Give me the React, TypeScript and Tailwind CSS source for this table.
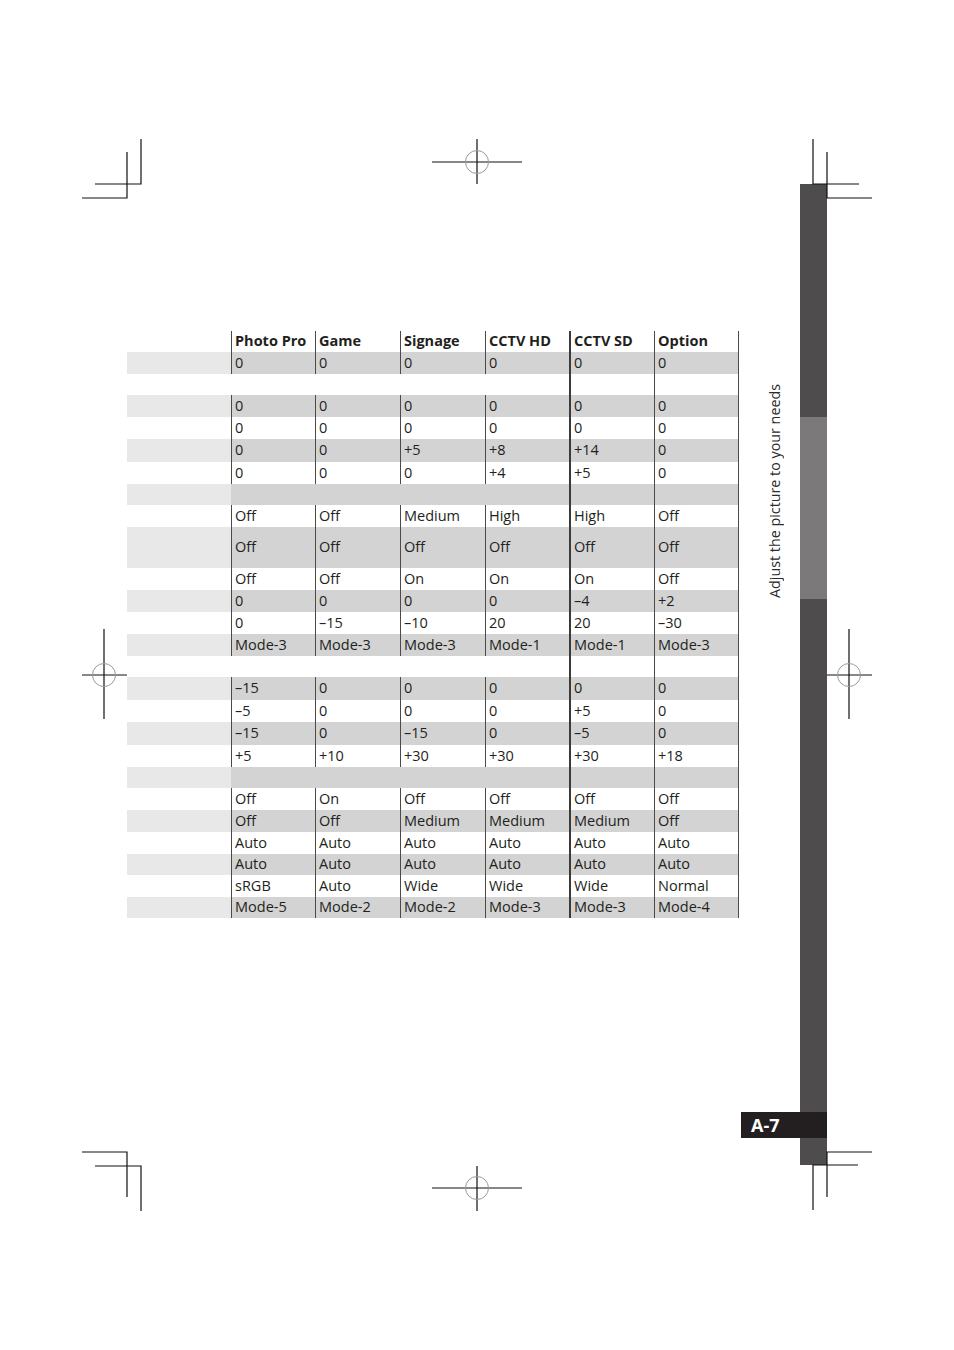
import React from "react";

type Row =
  | { kind: "data"; h: string; v: string[] }
  | { kind: "blank"; h: string }
  | { kind: "section"; h: string };

const cols = ["Photo Pro", "Game", "Signage", "CCTV HD", "CCTV SD", "Option"];

const rows: Row[] = [
  { kind: "data", h: "h-[22px]", v: ["0", "0", "0", "0", "0", "0"] },
  { kind: "blank", h: "h-[21px]" },
  { kind: "data", h: "h-[22px]", v: ["0", "0", "0", "0", "0", "0"] },
  { kind: "data", h: "h-[22px]", v: ["0", "0", "0", "0", "0", "0"] },
  { kind: "data", h: "h-[23px]", v: ["0", "0", "+5", "+8", "+14", "0"] },
  { kind: "data", h: "h-[22px]", v: ["0", "0", "0", "+4", "+5", "0"] },
  { kind: "section", h: "h-[21px]" },
  { kind: "data", h: "h-[22px]", v: ["Off", "Off", "Medium", "High", "High", "Off"] },
  { kind: "data", h: "h-[41px]", v: ["Off", "Off", "Off", "Off", "Off", "Off"] },
  { kind: "data", h: "h-[22px]", v: ["Off", "Off", "On", "On", "On", "Off"] },
  { kind: "data", h: "h-[22px]", v: ["0", "0", "0", "0", "–4", "+2"] },
  { kind: "data", h: "h-[22px]", v: ["0", "–15", "–10", "20", "20", "–30"] },
  { kind: "data", h: "h-[22px]", v: ["Mode-3", "Mode-3", "Mode-3", "Mode-1", "Mode-1", "Mode-3"] },
  { kind: "blank", h: "h-[21px]" },
  { kind: "data", h: "h-[23px]", v: ["–15", "0", "0", "0", "0", "0"] },
  { kind: "data", h: "h-[22px]", v: ["–5", "0", "0", "0", "+5", "0"] },
  { kind: "data", h: "h-[23px]", v: ["–15", "0", "–15", "0", "–5", "0"] },
  { kind: "data", h: "h-[22px]", v: ["+5", "+10", "+30", "+30", "+30", "+18"] },
  { kind: "section", h: "h-[21px]" },
  { kind: "data", h: "h-[22px]", v: ["Off", "On", "Off", "Off", "Off", "Off"] },
  { kind: "data", h: "h-[22px]", v: ["Off", "Off", "Medium", "Medium", "Medium", "Off"] },
  { kind: "data", h: "h-[22px]", v: ["Auto", "Auto", "Auto", "Auto", "Auto", "Auto"] },
  { kind: "data", h: "h-[21px]", v: ["Auto", "Auto", "Auto", "Auto", "Auto", "Auto"] },
  { kind: "data", h: "h-[22px]", v: ["sRGB", "Auto", "Wide", "Wide", "Wide", "Normal"] },
  { kind: "data", h: "h-[21px]", v: ["Mode-5", "Mode-2", "Mode-2", "Mode-3", "Mode-3", "Mode-4"] },
];

const grid = "grid grid-cols-[104px_84px_85px_85px_84px_85px_85px]";

// border on the left of each data column; CCTV SD has the heavier rule
const lineCls = [
  "border-l border-[#4a4a4a]",
  "border-l border-[#4a4a4a]",
  "border-l border-[#4a4a4a]",
  "border-l border-[#4a4a4a]",
  "border-l-2 border-[#3a3a3a]",
  "border-l border-r border-[#4a4a4a]",
];

function TableRow({ row, i }: { row: Row; i: number }) {
  const shaded = i % 2 === 0;
  const labelBg = shaded ? "bg-[#e8e8e8]" : "bg-white";
  const dataBg = shaded ? "bg-[#d3d3d3]" : "bg-white";

  if (row.kind !== "data") {
    return (
      <div className={`${grid} ${row.h}`}>
        <div className={labelBg} />
        <div className={`col-span-4 ${dataBg}`} />
        <div className={`${dataBg} ${lineCls[4]}`} />
        <div className={`${dataBg} ${lineCls[5]}`} />
      </div>
    );
  }

  return (
    <div className={`${grid} ${row.h}`}>
      <div className={labelBg} />
      {row.v.map((v, c) => (
        <div key={c} className={`flex items-center pl-[3px] ${dataBg} ${lineCls[c]}`}>
          {v}
        </div>
      ))}
    </div>
  );
}

function Marks() {
  const k = "#111";
  return (
    <svg className="absolute inset-0 pointer-events-none" width="954" height="1350" viewBox="0 0 954 1350">
      <g stroke={k} strokeWidth="1.2" fill="none">
        {/* top-left */}
        <path d="M141 139V184H95M127 152V198H82" />
        {/* top-right */}
        <path d="M813 139V184H859M827 152V198H872" />
        {/* bottom-left */}
        <path d="M82 1152H127V1197M95 1166H141V1211" />
        {/* bottom-right */}
        <path d="M872 1152H827V1197M858 1165H813V1210" />
        {/* registration crosses */}
        <path d="M432 162H522M477 139V184" />
        <path d="M432 1188H522M477 1166V1211" />
        <path d="M82 675H127M104 629V719" />
        <path d="M827 675H872M849 629V719" />
      </g>
      <g stroke="#999" strokeWidth="1" fill="none">
        <circle cx="477" cy="162" r="11.5" />
        <circle cx="477" cy="1188" r="11.5" />
        <circle cx="104" cy="675" r="11.5" />
        <circle cx="849" cy="675" r="11.5" />
      </g>
    </svg>
  );
}

export default function App() {
  return (
    <div className="relative flex w-[954px] h-[1350px] bg-white text-[#231f20] font-['Open_Sans',sans-serif]">
      {/* settings table */}
      <div className="ml-[127px] mt-[331px] w-[612px] text-[14.5px] leading-none">
        <div className={`${grid} h-[21px]`}>
          <div />
          {cols.map((c, i) => (
            <div key={c} className={`flex items-center pl-[3px] font-bold ${lineCls[i]}`}>
              {c}
            </div>
          ))}
        </div>
        {rows.map((r, i) => (
          <TableRow key={i} row={r} i={i} />
        ))}
      </div>

      {/* side caption */}
      <div className="w-[61px] pt-[384px] pl-[28px]">
        <div className="[writing-mode:vertical-rl] rotate-180 text-[14.3px] leading-[15px] text-[#2a2a2a] whitespace-nowrap">
          Adjust the picture to your needs
        </div>
      </div>

      {/* edge tab */}
      <div className="relative mt-[184px] w-[27px] h-[981px] flex flex-col">
        <div className="h-[233px] bg-[#4e4c4d]" />
        <div className="h-[182px] bg-[#7b797a]" />
        <div className="flex-1 bg-[#4e4c4d]" />
        <div className="absolute right-0 top-[928px] w-[86px] h-[26px] bg-[#231f20] flex items-center pl-[10px] text-white font-bold text-[18px]">
          A-7
        </div>
      </div>

      <Marks />
    </div>
  );
}
